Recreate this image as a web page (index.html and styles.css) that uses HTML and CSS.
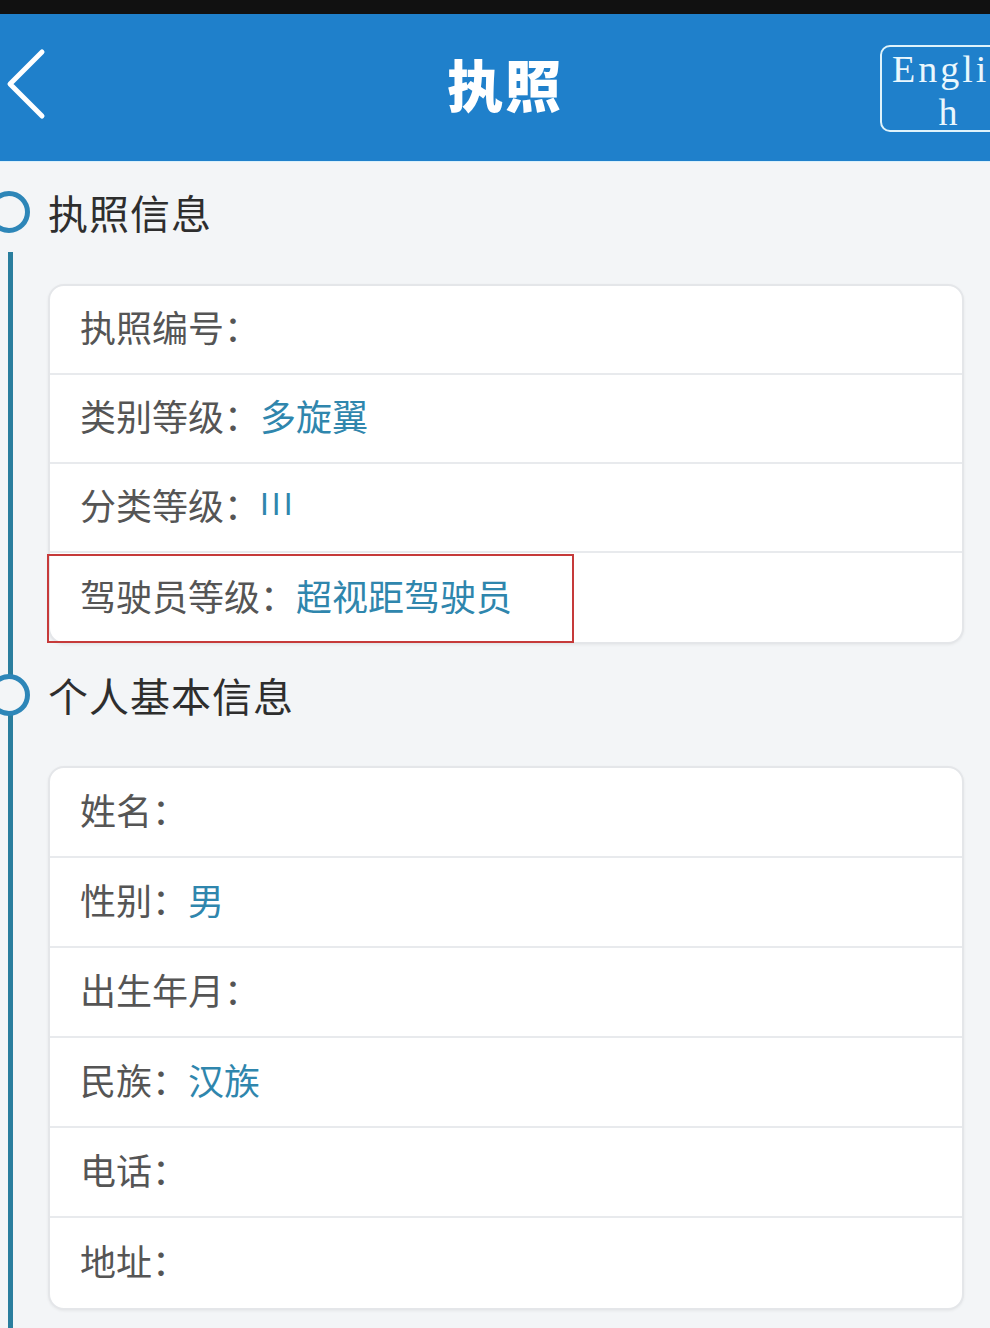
FILE: index.html
```html
<!DOCTYPE html>
<html lang="zh-CN">
<head>
<meta charset="utf-8">
<title>执照</title>
<link rel="stylesheet" href="styles.css">
</head>
<body>
<div class="statusbar"></div>
<header class="topbar">
  <div class="back">
    <svg width="44" height="72" viewBox="0 0 44 72"><path d="M38 4 L6 36 L38 68" fill="none" stroke="#fff" stroke-width="5" stroke-linecap="round" stroke-linejoin="round"/></svg>
  </div>
  <h1 class="title">执照</h1>
  <div class="langwrap"><div class="lang">English</div></div>
</header>

<div class="section-head first">
  <span class="dot"></span>
  <h2>执照信息</h2>
</div>

<div class="timeline">
  <div class="card c1">
    <div class="row"><span class="label">执照编号：</span></div>
    <div class="row"><span class="label">类别等级：</span><span class="value">多旋翼</span></div>
    <div class="row"><span class="label">分类等级：</span><span class="value roman">III</span></div>
    <div class="row hl-row"><div class="hl"><span class="label">驾驶员等级：</span><span class="value">超视距驾驶员</span></div></div>
  </div>

  <div class="section-head second">
    <span class="dot"></span>
    <h2>个人基本信息</h2>
  </div>

  <div class="card c2">
    <div class="row"><span class="label">姓名：</span></div>
    <div class="row"><span class="label">性别：</span><span class="value">男</span></div>
    <div class="row"><span class="label">出生年月：</span></div>
    <div class="row"><span class="label">民族：</span><span class="value">汉族</span></div>
    <div class="row"><span class="label">电话：</span></div>
    <div class="row"><span class="label">地址：</span></div>
  </div>
</div>
</body>
</html>
```

FILE: styles.css
```css
html, body {
  margin: 0;
  padding: 0;
}
body {
  width: 990px;
  height: 1328px;
  overflow: hidden;
  background: #f3f5f7;
  font-family: "Noto Sans CJK SC", "Noto Sans", sans-serif;
}
.statusbar {
  height: 14px;
  background: #111;
}
.topbar {
  height: 148px;
  background: #1f80cb;
  display: grid;
  grid-template-columns: 1fr auto 1fr;
  align-items: center;
  overflow: hidden;
  border-bottom: 1px solid #d9f0fb;
  box-sizing: border-box;
}
.back {
  padding-left: 4px;
  display: flex;
  align-items: center;
  height: 72px;
  margin-top: -8px;
}
.title {
  margin: -10px 0 0 20px;
  color: #fff;
  font-size: 56px;
  font-weight: 900;
  letter-spacing: 2px;
  line-height: 1;
}
.langwrap {
  display: flex;
  justify-content: flex-end;
  margin-right: -27px;
  margin-top: 1px;
}
.lang {
  flex: none;
  width: 137px;
  height: 87px;
  box-sizing: border-box;
  border: 2px solid #dff3fb;
  border-radius: 10px;
  color: #eaf7fd;
  font-family: "Liberation Serif", "DejaVu Serif", serif;
  font-size: 38px;
  line-height: 43px;
  letter-spacing: 3px;
  text-align: center;
  overflow: hidden;
  word-break: break-all;
  padding: 1px 4px 0 6px;
}
.section-head {
  display: flex;
  align-items: center;
  height: 70px;
}
.section-head.first {
  margin-top: 15px;
}
.section-head.second {
  margin-top: 16px;
}
.section-head h2 {
  margin: 0;
  font-size: 40px;
  font-weight: 400;
  color: #2e2e2e;
  line-height: 1;
  letter-spacing: 1px;
}
.dot {
  width: 42px;
  height: 42px;
  box-sizing: border-box;
  border: 5px solid #2d86b8;
  border-radius: 50%;
  background: #f3f5f7;
  flex: none;
  margin-left: -12px;
  margin-right: 18px;
}
.second .dot {
  margin-left: -25px;
}
.timeline {
  margin-top: 5px;
  margin-left: 8px;
  padding-top: 32px;
  border-left: 5px solid #2a7e9e;
  padding-bottom: 40px;
}
.card {
  margin-left: 35px;
  margin-right: 26px;
  background: #fff;
  border: 2px solid #e4e6e9;
  border-radius: 16px;
  box-shadow: 0 1px 3px rgba(0, 0, 0, 0.06);
}
.c2 {
  margin-top: 36px;
}
.row {
  height: 89px;
  display: flex;
  align-items: center;
  padding-left: 30px;
  padding-bottom: 7px;
  border-bottom: 2px solid #e8eaed;
  box-sizing: border-box;
  font-size: 36px;
}
.c2 .row {
  height: 90px;
}
.row:last-child {
  border-bottom: none;
}
.label {
  color: #555;
}
.value {
  color: #2f86ad;
}
.roman {
  font-family: "DejaVu Sans", sans-serif;
  font-size: 30px;
  letter-spacing: 3px;
}
.hl-row {
  padding-left: 0;
  padding-bottom: 0;
  align-items: flex-end;
}
.hl {
  margin-left: -3px;
  width: 527px;
  height: 89px;
  box-sizing: border-box;
  border: 2px solid #c63a3a;
  display: flex;
  align-items: center;
  padding-left: 31px;
  padding-bottom: 7px;
  margin-bottom: -1px;
}
```
